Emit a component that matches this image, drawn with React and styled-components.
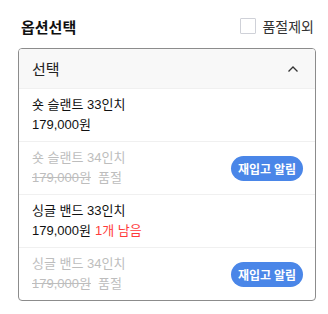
import styled, { createGlobalStyle } from "styled-components"

const GlobalStyle = createGlobalStyle`
  body {
    margin: 0;
    background: #fff;
    font-family: "Liberation Sans", "Noto Sans CJK KR", sans-serif;
  }
`

const options = [
  { name: "숏 슬랜트 33인치", price: "179,000원" },
  { name: "숏 슬랜트 34인치", price: "179,000원", soldOut: true },
  { name: "싱글 밴드 33인치", price: "179,000원", left: "1개 남음" },
  { name: "싱글 밴드 34인치", price: "179,000원", soldOut: true },
]

const App = () => {
  return (
    <Page>
      <GlobalStyle />
      <TopBar>
        <Title>옵션선택</Title>
        <Filter>
          <Check />
          <FilterLabel>품절제외</FilterLabel>
        </Filter>
      </TopBar>
      <Select>
        <SelectHead>
          <span>선택</span>
          <svg width="12" height="8" viewBox="0 0 12 8">
            <path d="M1.5 6.5 L6 2 L10.5 6.5" fill="none" stroke="#333" strokeWidth="1.3" />
          </svg>
        </SelectHead>
        {options.map((o) => (
          <Row key={o.name}>
            <Info $soldOut={o.soldOut}>
              <Name>{o.name}</Name>
              <PriceLine>
                <Price $soldOut={o.soldOut}>{o.price}</Price>
                {o.soldOut && <Status>품절</Status>}
                {o.left && <Left>{o.left}</Left>}
              </PriceLine>
            </Info>
            {o.soldOut && <Notify>재입고 알림</Notify>}
          </Row>
        ))}
      </Select>
    </Page>
  )
}

const Page = styled.div`
  width: 328px;
  padding: 17px 14px 0 18px;
  box-sizing: border-box;
`

const TopBar = styled.div`
  display: flex;
  justify-content: space-between;
  align-items: center;
  height: 18px;
`

const Title = styled.h2`
  margin: 0 0 0 3px;
  font-size: 15px;
  font-weight: bold;
  color: #111;
`

const Filter = styled.label`
  display: flex;
  align-items: center;
  gap: 6px;
`

const Check = styled.span`
  width: 14px;
  height: 14px;
  border: 1px solid #cfd1d8;
  border-radius: 1px;
`

const FilterLabel = styled.span`
  font-size: 14px;
  color: #333;
`

const Select = styled.div`
  margin-top: 13px;
  width: 296px;
  border: 1px solid #8c8c8c;
  border-radius: 4px;
  overflow: hidden;
`

const SelectHead = styled.div`
  height: 39px;
  display: flex;
  align-items: center;
  justify-content: space-between;
  padding: 0 16px 0 13px;
  background: #f8f8f8;
  font-size: 15px;
  color: #222;
`

const Row = styled.div`
  height: 52px;
  border-top: 1px solid #f0f0f0;
  display: flex;
  align-items: center;
  justify-content: space-between;
  padding: 0 12px 0 13px;
`

const Info = styled.div`
  display: flex;
  flex-direction: column;
  color: ${(p) => (p.$soldOut ? "#bdbdbd" : "#111")};
  font-size: 13px;
  line-height: 20px;
`

const Name = styled.div``

const PriceLine = styled.div`
  display: flex;
  gap: 4px;
`

const Price = styled.span`
  text-decoration: ${(p) => (p.$soldOut ? "line-through" : "none")};
`

const Status = styled.span`
  margin-left: 3px;
`

const Left = styled.span`
  color: #ff3b3b;
`

const Notify = styled.button`
  width: 72px;
  height: 25px;
  border: none;
  border-radius: 13px;
  background: #4a86e8;
  color: #fff;
  font-family: "Noto Sans CJK KR", sans-serif;
  font-size: 12px;
  font-weight: bold;
  padding: 0;
`

export default App
